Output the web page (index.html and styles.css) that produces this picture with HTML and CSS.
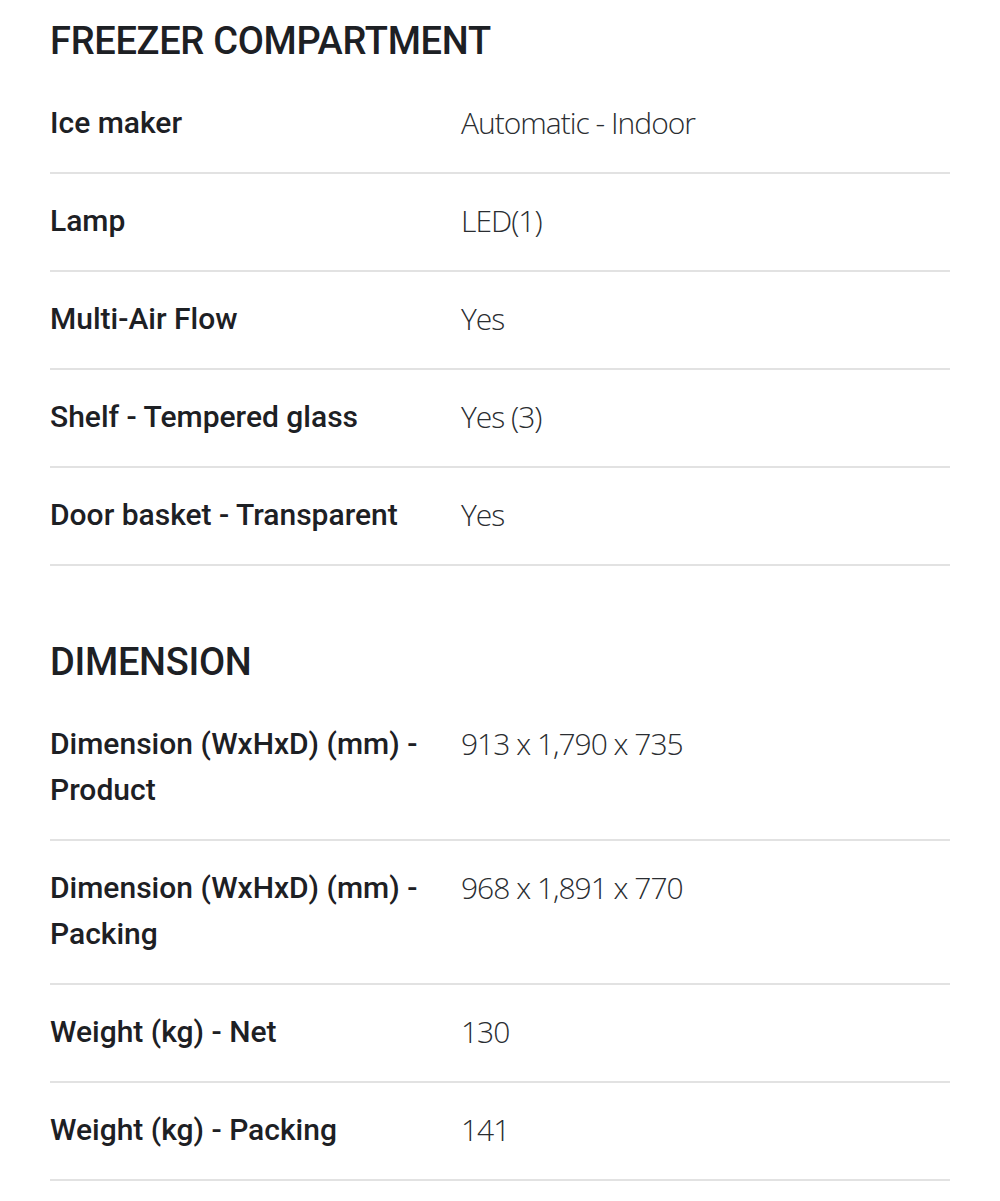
FILE: index.html
```html
<!DOCTYPE html>
<html lang="en">
<head>
<meta charset="utf-8">
<title>Specifications</title>
<link rel="stylesheet" href="styles.css">
</head>
<body>
<main class="specs">
  <section class="spec-section">
    <h2 class="spec-title">FREEZER COMPARTMENT</h2>
    <dl class="spec-list">
      <div class="spec-row"><dt class="spec-label">Ice maker</dt><dd class="spec-value">Automatic - Indoor</dd></div>
      <div class="spec-row"><dt class="spec-label">Lamp</dt><dd class="spec-value">LED(1)</dd></div>
      <div class="spec-row"><dt class="spec-label">Multi-Air Flow</dt><dd class="spec-value">Yes</dd></div>
      <div class="spec-row"><dt class="spec-label">Shelf - Tempered glass</dt><dd class="spec-value">Yes (3)</dd></div>
      <div class="spec-row"><dt class="spec-label">Door basket - Transparent</dt><dd class="spec-value">Yes</dd></div>
    </dl>
  </section>
  <section class="spec-section spec-section--next">
    <h2 class="spec-title">DIMENSION</h2>
    <dl class="spec-list">
      <div class="spec-row"><dt class="spec-label">Dimension (WxHxD) (mm) - Product</dt><dd class="spec-value">913 x 1,790 x 735</dd></div>
      <div class="spec-row"><dt class="spec-label">Dimension (WxHxD) (mm) - Packing</dt><dd class="spec-value">968 x 1,891 x 770</dd></div>
      <div class="spec-row"><dt class="spec-label">Weight (kg) - Net</dt><dd class="spec-value">130</dd></div>
      <div class="spec-row"><dt class="spec-label">Weight (kg) - Packing</dt><dd class="spec-value">141</dd></div>
    </dl>
  </section>
</main>
</body>
</html>
```
FILE: styles.css
```css
html, body {
  margin: 0;
  padding: 0;
  background: #ffffff;
}

body {
  font-family: Roboto, "Noto Sans", sans-serif;
  color: #1d2024;
}

.specs {
  padding: 0 50px;
}

.spec-section--next {
  margin-top: 55px;
}

.spec-title {
  margin: 0 0 10px;
  padding-top: 16px;
  font-size: 38px;
  line-height: 50px;
  font-weight: 500;
  letter-spacing: -0.3px;
  color: #1d2024;
}

.spec-list {
  margin: 0;
}

.spec-row {
  display: grid;
  grid-template-columns: 411px 1fr;
  align-items: start;
  padding: 24px 0 26px;
  border-bottom: 2px solid #e2e2e2;
  font-size: 30px;
  line-height: 46px;
}

.spec-label {
  margin: 0;
  padding-right: 24px;
  font-weight: 500;
  color: #1d2024;
}

.spec-value {
  margin: 0;
  font-family: "Open Sans", Roboto, sans-serif;
  font-weight: 300;
  letter-spacing: -1px;
  color: #2a2d31;
}
```
